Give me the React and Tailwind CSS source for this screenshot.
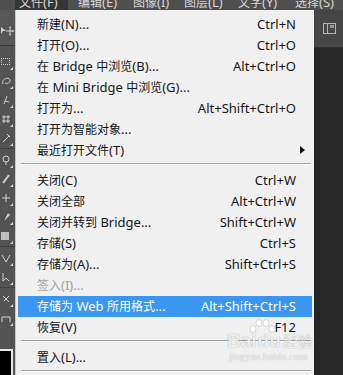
import React from "react";

const CJK = /([\u3400-\u9fff\uff00-\uffef]+)/;
function seg(s) {
  return s.split(CJK).map((p, i) =>
    CJK.test(p) ? (
      <span key={i} className="text-[12px]">{p}</span>
    ) : (
      <React.Fragment key={i}>{p}</React.Fragment>
    )
  );
}

const groups = [
  [
    ["新建(N)...", "Ctrl+N"],
    ["打开(O)...", "Ctrl+O"],
    ["在 Bridge 中浏览(B)...", "Alt+Ctrl+O"],
    ["在 Mini Bridge 中浏览(G)...", ""],
    ["打开为...", "Alt+Shift+Ctrl+O"],
    ["打开为智能对象...", ""],
    ["最近打开文件(T)", "", "sub"],
  ],
  [
    ["关闭(C)", "Ctrl+W"],
    ["关闭全部", "Alt+Ctrl+W"],
    ["关闭并转到 Bridge...", "Shift+Ctrl+W"],
    ["存储(S)", "Ctrl+S"],
    ["存储为(A)...", "Shift+Ctrl+S"],
    ["签入(I)...", "", "disabled"],
    ["存储为 Web 所用格式...", "Alt+Shift+Ctrl+S", "active"],
    ["恢复(V)", "F12"],
  ],
  [["置入(L)...", ""]],
];

function Row({ label, sc, kind }) {
  const active = kind === "active";
  const disabled = kind === "disabled";
  return (
    <div
      className={`mx-[2px] h-[21px] flex items-center justify-between pl-[19px] ${
        kind === "sub" ? "pr-[7px]" : "pr-[16px]"
      } ${active ? "bg-[#3a96ef] text-white" : disabled ? "text-[#a3a3a3]" : "text-[#161616]"}`}
    >
      <span className="whitespace-nowrap">{seg(label)}</span>
      {kind === "sub" ? (
        <svg width="5" height="8" viewBox="0 0 5 8" className="mt-[-2px]">
          <path d="M0 0 L5 4 L0 8 Z" fill="#111" />
        </svg>
      ) : (
        <span className="whitespace-nowrap">{sc}</span>
      )}
    </div>
  );
}

function Sep() {
  return (
    <div className="h-[9px] pt-[2px] ml-[5px] mr-[3px]">
      <div className="h-px bg-[#a2a2a2]" />
      <div className="h-px bg-white" />
    </div>
  );
}

function Tri() {
  return (
    <svg width="3" height="3" viewBox="0 0 3 3" className="absolute right-[2px] bottom-[1px]">
      <path d="M3 0 L3 3 L0 3 Z" fill="#d8d8d8" />
    </svg>
  );
}

function Tool({ children }) {
  return (
    <div className="relative h-[19px] w-[15px] flex items-center justify-start pl-[1px]">
      {children}
      <Tri />
    </div>
  );
}

export default function App() {
  const top = [
    ["编辑(E)", "w-[55px]"],
    ["图像(I)", "w-[51px]"],
    ["图层(L)", "w-[54px]"],
    ["文字(Y)", "w-[57px]"],
    ["选择(S)", "w-[48px]"],
  ];
  return (
    <div className="relative w-[343px] h-[375px] overflow-hidden bg-[#282828] font-['Noto_Sans','Noto_Sans_CJK_SC',sans-serif] text-[13px]">
      {/* top menu bar */}
      <div className="h-[10px] flex bg-[#4f4f4f] text-[#d6d6d6] overflow-hidden">
        <div className="w-[15px] shrink-0" />
        <div className="w-[53px] shrink-0 bg-[#363636] pl-[4px] overflow-hidden">
          <div className="mt-[-6px] leading-[16px] whitespace-nowrap">{seg("文件(F)")}</div>
        </div>
        <div className="w-[10px] shrink-0" />
        {top.map(([t, w]) => (
          <div key={t} className={`${w} shrink-0 overflow-hidden`}>
            <div className="mt-[-6px] leading-[16px] whitespace-nowrap">{seg(t)}</div>
          </div>
        ))}
      </div>

      <div className="flex h-[365px]">
        {/* left toolbar */}
        <div className="w-[15px] shrink-0 bg-[#535353] flex flex-col">
          <div className="h-[36px] bg-[#575757] border-b border-[#3a3a3a] flex items-center pl-[1px] pt-[6px]">
            <svg width="13" height="10" viewBox="0 0 13 10">
              <path d="M0 1 L5 5 L2 5 L0 8 Z" fill="#d0d0d0" />
              <path d="M9 1 V9 M5 5 H13" stroke="#d0d0d0" strokeWidth="1" />
              <path d="M9 0 L8 2 H10 Z M9 10 L8 8 H10 Z M13 5 L11 4 V6 Z" fill="#d0d0d0" />
            </svg>
          </div>
          <div className="flex flex-col pt-[6px]">
            <Tool>
              <div className="w-[9px] h-[7px] border border-dotted border-[#cfcfcf]" />
            </Tool>
            <Tool>
              <svg width="10" height="10" viewBox="0 0 10 10"><path d="M2 8 C0 3 8 0 9 4 C10 7 5 8 4 7" stroke="#cfcfcf" fill="none" /></svg>
            </Tool>
            <Tool>
              <svg width="10" height="10" viewBox="0 0 10 10"><path d="M3 9 L6 1 M4 6 L8 7" stroke="#cfcfcf" fill="none" /></svg>
            </Tool>
            <Tool>
              <svg width="10" height="10" viewBox="0 0 10 10"><path d="M1 3 H9 M1 7 H9 M3 1 V9 M7 1 V9" stroke="#cfcfcf" fill="none" /></svg>
            </Tool>
            <Tool>
              <svg width="10" height="10" viewBox="0 0 10 10"><path d="M2 9 L8 3 M6 1 L9 4" stroke="#cfcfcf" fill="none" /></svg>
            </Tool>
            <div className="h-px bg-[#404040] my-[1px]" />
            <Tool>
              <svg width="10" height="10" viewBox="0 0 10 10"><circle cx="5" cy="4" r="3" stroke="#cfcfcf" fill="none" /><path d="M5 7 V10" stroke="#cfcfcf" /></svg>
            </Tool>
            <Tool>
              <svg width="10" height="10" viewBox="0 0 10 10"><path d="M2 9 L8 1" stroke="#cfcfcf" strokeWidth="2" /></svg>
            </Tool>
            <Tool>
              <svg width="10" height="10" viewBox="0 0 10 10"><path d="M1 5 H9 M5 1 V9" stroke="#cfcfcf" /></svg>
            </Tool>
            <Tool>
              <svg width="10" height="10" viewBox="0 0 10 10"><path d="M3 9 L7 1 L9 3 Z" fill="#cfcfcf" /></svg>
            </Tool>
            <Tool>
              <div className="w-[8px] h-[8px] bg-[#bdbdbd]" />
            </Tool>
            <div className="h-px bg-[#404040] my-[1px]" />
            <Tool>
              <svg width="10" height="10" viewBox="0 0 10 10"><path d="M1 2 L5 9 L9 2" stroke="#cfcfcf" fill="none" /></svg>
            </Tool>
            <Tool>
              <svg width="10" height="10" viewBox="0 0 10 10"><path d="M2 1 L2 9 L5 6 L8 9" stroke="#cfcfcf" fill="none" /></svg>
            </Tool>
            <div className="h-px bg-[#404040] my-[1px]" />
            <Tool>
              <svg width="10" height="10" viewBox="0 0 10 10"><path d="M2 2 L8 8 M8 2 L3 7" stroke="#cfcfcf" fill="none" /></svg>
            </Tool>
            <Tool>
              <svg width="10" height="10" viewBox="0 0 10 10"><path d="M1 9 V4 H9 V9" stroke="#cfcfcf" fill="none" /></svg>
            </Tool>
          </div>
          <div className="flex-1" />
          <div className="h-[26px] w-[13px] bg-black border-t-2 border-r-2 border-[#e8e8e8]" />
        </div>

        {/* menu */}
        <div className="w-[299px] shrink-0 bg-[#f0f0f0] pt-[4px] border-l border-[#c8c8c8]">
          {groups.map((g, gi) => (
            <React.Fragment key={gi}>
              {gi > 0 && <Sep />}
              {g.map(([l, s, k]) => (
                <Row key={l} label={l} sc={s} kind={k} />
              ))}
            </React.Fragment>
          ))}
          <Sep />
        </div>

        {/* right panel */}
        <div className="flex-1 flex flex-col">
          <div className="h-[38px] bg-[#464646] border-b border-[#2e2e2e] flex items-center justify-center pl-[2px]">
            <svg width="13" height="11" viewBox="0 0 13 11">
              <rect x="0.5" y="0.5" width="12" height="10" fill="none" stroke="#b5b5b5" />
              <rect x="4" y="1" width="1" height="9" fill="#b5b5b5" />
              <rect x="7" y="2" width="4" height="3" fill="#9a9a9a" />
            </svg>
          </div>
          <div className="flex-1 bg-[#262626]" />
        </div>
      </div>

      {/* watermark */}
      <div className="absolute left-[227px] top-[332px] text-white/85 pointer-events-none">
        <div className="relative flex items-end leading-[17px]">
          <span className="text-[19px] font-bold font-['Liberation_Sans',sans-serif] [text-shadow:0_0_1px_rgba(0,0,0,0.45)]">Bai</span>
          <span className="text-[19px] font-bold font-['Liberation_Sans',sans-serif] ml-[1px] [text-shadow:0_0_1px_rgba(0,0,0,0.45)]">du</span>
          <span className="text-[15px] ml-[2px] font-['Noto_Sans_CJK_SC',sans-serif] [text-shadow:0_0_1px_rgba(0,0,0,0.45)]">经验</span>
          <svg width="26" height="16" viewBox="0 0 26 16" className="absolute left-[22px] top-[-13px]">
            <ellipse cx="4" cy="10" rx="3" ry="3.5" fill="white" stroke="#bbb" strokeWidth="0.6" />
            <ellipse cx="10" cy="4" rx="3" ry="3.5" fill="white" stroke="#bbb" strokeWidth="0.6" />
            <ellipse cx="17" cy="4" rx="3" ry="3.5" fill="white" stroke="#bbb" strokeWidth="0.6" />
            <ellipse cx="23" cy="10" rx="3" ry="3.5" fill="white" stroke="#bbb" strokeWidth="0.6" />
          </svg>
        </div>
        <div className="text-[10.5px] leading-[12px] text-white/70 font-['Liberation_Serif',serif] mt-[2px] ml-[2px] [text-shadow:0_0_1px_rgba(0,0,0,0.3)]">jingyan.baidu.com</div>
      </div>
    </div>
  );
}
